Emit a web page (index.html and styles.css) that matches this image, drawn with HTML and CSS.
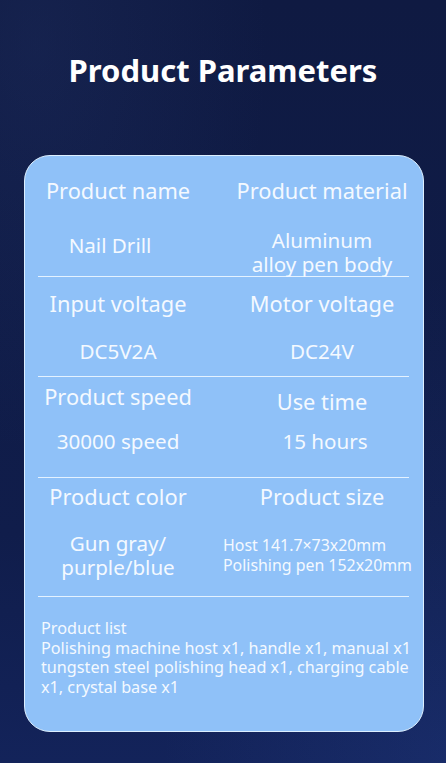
FILE: index.html
```html
<!DOCTYPE html>
<html lang="en">
  <head>
    <meta charset="UTF-8" />
    <meta name="viewport" content="width=device-width, initial-scale=1.0" />
    <title>Product Parameters</title>
    <link rel="stylesheet" href="styles.css">
  </head>
  <body>
    <div class="page">
      <h1>Product Parameters</h1>

      <div class="card">
        <div class="param-row row-1">
          <div class="cell">
            <div class="label">Product name</div>
            <div class="value value-drill">Nail Drill</div>
          </div>
          <div class="cell">
            <div class="label">Product material</div>
            <div class="value">Aluminum<br />alloy pen body</div>
          </div>
        </div>

        <div class="param-row row-2">
          <div class="cell">
            <div class="label">Input voltage</div>
            <div class="value">DC5V2A</div>
          </div>
          <div class="cell">
            <div class="label">Motor voltage</div>
            <div class="value">DC24V</div>
          </div>
        </div>

        <div class="param-row row-3">
          <div class="cell">
            <div class="label">Product speed</div>
            <div class="value">30000 speed</div>
          </div>
          <div class="cell">
            <div class="label label-low">Use time</div>
            <div class="value value-high">15 hours</div>
          </div>
        </div>

        <div class="param-row row-4">
          <div class="cell">
            <div class="label">Product color</div>
            <div class="value">Gun gray/<br />purple/blue</div>
          </div>
          <div class="cell">
            <div class="label">Product size</div>
            <div class="value value-small">
              Host 141.7×73x20mm<br />Polishing pen 152x20mm
            </div>
          </div>
        </div>

        <div class="product-list">
          Product list<br />
          Polishing machine host x1, handle x1, manual x1<br />
          tungsten steel polishing head x1, charging cable<br />
          x1, crystal base x1
        </div>
      </div>
    </div>
  </body>
</html>
```

FILE: styles.css
```css
/* page */
body {
  margin: 0;
  font-family: "Noto Sans", "Open Sans", sans-serif;
  background: #101b44;
}

.page {
  min-height: 763px;
  box-sizing: border-box;
  padding-top: 50px;
  background:
    radial-gradient(ellipse at 8% 6%, rgba(50, 70, 130, 0.18), transparent 40%),
    radial-gradient(ellipse at 100% 100%, rgba(40, 70, 150, 0.25), transparent 45%),
    linear-gradient(180deg, #0f1a42 0%, #101d4b 70%, #13235a 100%);
  overflow: hidden;
}

h1 {
  margin: 0;
  text-align: center;
  color: #ffffff;
  font-size: 31px;
  line-height: 40px;
  font-weight: 700;
}

/* card */
.card {
  margin: 65px 22px 0 24px;
  background-color: #8fc1f8;
  border: 1.5px solid #dcefff;
  border-radius: 26px;
  padding: 0 14px 34px 13px;
  color: #f4f9ff;
}

.param-row {
  display: grid;
  grid-template-columns: 160px 176px;
  column-gap: 36px;
  border-bottom: 1.5px solid #e4f2ff;
}

.cell {
  text-align: center;
}

.label {
  font-size: 21.8px;
  line-height: 28px;
  white-space: nowrap;
}

.value {
  font-size: 20.6px;
  line-height: 24px;
  white-space: nowrap;
}

/* row spacing */
.row-1 {
  padding-top: 21px;
}

.row-1 .value {
  margin-top: 23px;
}

.row-1 .value-drill {
  margin-top: 28px;
  margin-right: 16px;
}

.row-2 {
  padding: 13px 0 13px;
}

.row-2 .value {
  margin-top: 21px;
}

.row-3 {
  padding: 6px 0 24px;
}

.row-3 .value {
  margin-top: 18px;
}

.row-3 .label-low {
  margin-top: 5px;
}

.row-3 .value-high {
  margin-top: 13px;
  margin-left: 6px;
}

.row-4 {
  padding: 5px 0 17px;
}

.row-4 .value {
  margin-top: 20px;
}

.value-small {
  font-size: 15.9px;
  line-height: 20px;
  text-align: left;
  margin-left: -11px;
  padding-top: 4px;
}

/* product list */
.product-list {
  padding-top: 22px;
  padding-left: 3px;
  font-size: 16.2px;
  line-height: 19.5px;
  white-space: nowrap;
}
```
